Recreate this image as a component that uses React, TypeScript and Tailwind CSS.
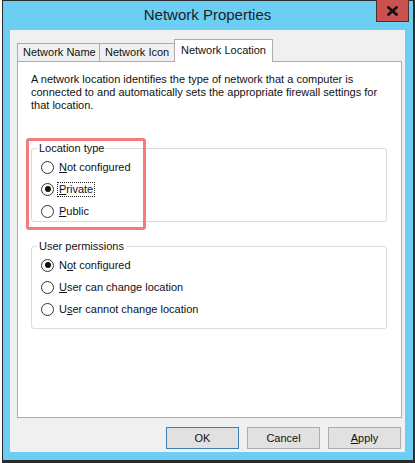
import type { ReactNode } from "react";

function Radio({ checked, children, focused }: { checked?: boolean; children: ReactNode; focused?: boolean }) {
  return (
    <div className="flex h-[22px] items-center pl-[9px]">
      <span className="flex h-[13px] w-[13px] items-center justify-center rounded-full border border-[#333] bg-white">
        {checked && <span className="h-[6px] w-[6px] rounded-full bg-[#111]" />}
      </span>
      <span className={focused ? "ml-[3px] border border-dotted border-[#222] px-px leading-[13px]" : "ml-[5px]"}>
        {children}
      </span>
    </div>
  );
}

function GroupBox({ title, children, className }: { title: string; children: ReactNode; className?: string }) {
  return (
    <fieldset className={`rounded-[3px] border border-[#dcdcdc] ${className ?? ""}`}>
      <legend className="ml-[5px] px-[2px] leading-[14px]">{title}</legend>
      {children}
    </fieldset>
  );
}

function Button({ children, primary }: { children: ReactNode; primary?: boolean }) {
  return (
    <button
      className={`h-[22px] w-[73px] border bg-[#e1e1e1] text-center leading-[20px] ${primary ? "border-[#3c7fb1]" : "border-[#adadad]"}`}
    >
      {children}
    </button>
  );
}

export default function App() {
  return (
    <div className="h-[463px] w-[415px] bg-white font-['Liberation_Sans',sans-serif] text-[11px] text-[#111]">
      <div className="relative ml-[2px] flex h-[463px] w-[413px] flex-col border-t border-r-2 border-b-[3px] border-l border-[#2b2b2b] bg-[#6ccef2] pr-[8px] pb-[8px] pl-[7px]">
        {/* title bar */}
        <div className="relative flex h-[29px] shrink-0 items-center justify-center">
          <span className="text-[15px] text-[#15232b]">Network Properties</span>
          <div className="absolute top-[-1px] right-[-4px] flex h-[22px] w-[33px] items-center justify-center border border-t-0 border-[#4a3030] bg-[#c9524e]">
            <svg width="11" height="10" viewBox="0 0 11 10">
              <path d="M1.5 1.5 L9.5 8.5 M9.5 1.5 L1.5 8.5" stroke="#111" strokeWidth="2.6" strokeLinecap="square" />
            </svg>
          </div>
        </div>

        {/* client */}
        <div className="flex h-[422px] w-[395px] flex-col bg-[#f0f0f0] pl-[7px]">
          <div className="flex h-[31px] items-end pt-[9px]">
            <div className="-mr-px flex h-[18px] w-[83px] items-center border border-b-0 border-[#acacac] bg-[#f0f0f0] pl-[5px]">
              Network Name
            </div>
            <div className="-mr-px flex h-[18px] w-[76px] items-center border border-b-0 border-[#acacac] bg-[#f0f0f0] pl-[5px]">
              Network Icon
            </div>
            <div className="relative z-10 -mb-px flex h-[23px] w-[99px] items-start border border-b-0 border-[#acacac] bg-white pt-[2px] pl-[6px]">
              Network Location
            </div>
          </div>

          <div className="h-[357px] w-[385px] border border-[#acacac] bg-white pt-[11px] pl-[13px]">
            <p className="w-[362px] leading-[13px]">
              A network location identifies the type of network that a computer is connected to and automatically sets the
              appropriate firewall settings for that location.
            </p>

            <div className="relative mt-[29px] w-[356px]">
              <GroupBox title="Location type" className="h-[81px]">
                <div className="mt-px">
                  <Radio>
                    <span className="underline">N</span>ot configured
                  </Radio>
                  <Radio checked focused>
                    <span className="underline">P</span>rivate
                  </Radio>
                  <Radio>
                    <span className="underline">P</span>ublic
                  </Radio>
                </div>
              </GroupBox>
              {/* annotation box */}
              <div className="pointer-events-none absolute top-[-3px] left-[-5px] h-[92px] w-[120px] rounded-[3px] border-[3px] border-[#f47c7c]" />
            </div>

            <GroupBox title="User permissions" className="mt-[17px] h-[90px] w-[356px]">
              <div className="mt-px">
                <Radio checked>
                  N<span className="underline">o</span>t configured
                </Radio>
                <Radio>
                  <span className="underline">U</span>ser can change location
                </Radio>
                <Radio>
                  U<span className="underline">s</span>er cannot change location
                </Radio>
              </div>
            </GroupBox>
          </div>

          <div className="mt-[9px] flex justify-end gap-[8px] pr-[4px]">
            <Button primary>OK</Button>
            <Button>Cancel</Button>
            <Button>
              <span className="underline">A</span>pply
            </Button>
          </div>
        </div>
      </div>
    </div>
  );
}
